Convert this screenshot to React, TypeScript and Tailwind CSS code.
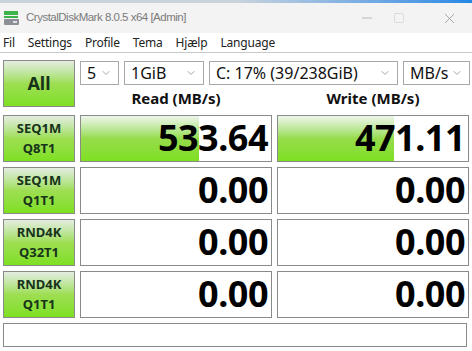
import { ChevronDown, Minus, Square, X } from "lucide-react";

const font = { fontFamily: '"Noto Sans", "Open Sans", sans-serif' };
const titleFont = { fontFamily: '"Liberation Sans", Arial, sans-serif' };

const rows = [
	{ a: "SEQ1M", b: "Q8T1", read: "533.64", write: "471.11", rw: 118, ww: 116 },
	{ a: "SEQ1M", b: "Q1T1", read: "0.00", write: "0.00", rw: 0, ww: 0 },
	{ a: "RND4K", b: "Q32T1", read: "0.00", write: "0.00", rw: 0, ww: 0 },
	{ a: "RND4K", b: "Q1T1", read: "0.00", write: "0.00", rw: 0, ww: 0 },
];

const Select = ({ label, className }: { label: string; className: string }) => (
	<div
		className={`h-[24px] border border-[#a8a8a8] bg-white flex items-center justify-between pl-[6px] pr-[6px] text-[16px] text-[#111] ${className}`}
	>
		<span className="leading-none">{label}</span>
		<ChevronDown className="size-3 text-[#888]" strokeWidth={1.5} />
	</div>
);

const TestButton = ({ children }: { children: React.ReactNode }) => (
	<div className="w-[72px] h-[47px] border border-[#8a8a8a] bg-gradient-to-b from-[#e4ece0] via-[#9ede52] to-[#7ee01e] flex flex-col items-center justify-center font-bold text-[#17331a] leading-[20px]">
		{children}
	</div>
);

const Value = ({ value, width }: { value: string; width: number }) => (
	<div className="relative w-[192px] h-[47px] border border-[#8a8a8a] bg-white overflow-hidden">
		<div
			className="absolute left-0 top-0 bottom-0 bg-gradient-to-b from-[#eef5ea] via-[#96dc4a] to-[#7ee01e]"
			style={{ width }}
		/>
		<div className="relative h-full flex items-center justify-end pr-[3px] text-[36px] font-bold text-black leading-none tracking-[-0.5px]">
			{value}
		</div>
	</div>
);

export default function App() {
	return (
		<div className="w-[472px] h-[351px] bg-white overflow-hidden" style={font}>
			<div className="h-[3px] bg-gradient-to-r from-[#c9d3dc] via-[#c9d3dc] to-[#1e88e5]" />
			<div className="h-[30px] bg-[#f3f3f3] flex items-center">
				<div className="ml-[4px] w-[15px] h-[14px] flex flex-col gap-[1px]">
					<div className="h-[4px] w-[14px] bg-[#3cb44a]" />
					<div className="h-[2px] w-[14px] bg-[#3cb44a]" />
					<div className="h-[6px] w-[15px] bg-[#8c9096] rounded-[1px] flex items-center justify-end pr-[2px]">
						<div className="w-[4px] h-[2px] bg-[#e0e0e0]" />
					</div>
				</div>
				<span className="ml-[7px] text-[11.5px] tracking-[-0.5px] text-[#7b7b7b]" style={titleFont}>
					CrystalDiskMark 8.0.5 x64 [Admin]
				</span>
				<div className="ml-auto flex items-center">
					<Minus className="size-4 text-[#9a9a9a] mr-[18px]" strokeWidth={1} />
					<Square className="size-3 text-[#c4c4c4] mr-[36px]" strokeWidth={1} />
					<X className="size-[17px] text-[#8a8a8a] mr-[14px]" strokeWidth={1} />
				</div>
			</div>
			<div className="h-[20px] bg-white border-b border-[#c8c8c8] flex items-center gap-[13px] pl-[3px] text-[12px] tracking-[-0.2px] text-[#222]">
				<span>Fil</span>
				<span>Settings</span>
				<span>Profile</span>
				<span>Tema</span>
				<span>Hjælp</span>
				<span>Language</span>
			</div>
			<div className="pl-[3px] pt-[7px] flex flex-col gap-[5px]">
				<div className="flex gap-[5px]">
					<div className="w-[72px] h-[47px] border border-[#8a8a8a] bg-gradient-to-b from-[#e4ece0] via-[#9ede52] to-[#7ee01e] flex items-center justify-center font-bold text-[18px] text-[#17331a]">
						All
					</div>
					<div className="flex flex-col">
						<div className="flex gap-[5px] pt-[1px]">
							<Select label="5" className="w-[39px]" />
							<Select label="1GiB" className="w-[80px]" />
							<Select label="C: 17% (39/238GiB)" className="w-[189px]" />
							<Select label="MB/s" className="w-[67px]" />
						</div>
						<div className="flex gap-[5px] mt-[2px] text-[15px] font-bold text-[#111]">
							<div className="w-[192px] text-center">Read (MB/s)</div>
							<div className="w-[192px] text-center">Write (MB/s)</div>
						</div>
					</div>
				</div>
				{rows.map((r, i) => (
					<div key={i} className="flex gap-[5px]">
						<TestButton>
							<span className="text-[13px]">{r.a}</span>
							<span className="text-[13px]">{r.b}</span>
						</TestButton>
						<Value value={r.read} width={r.rw} />
						<Value value={r.write} width={r.ww} />
					</div>
				))}
				<div className="w-[464px] h-[24px] border border-[#8a8a8a] bg-white" />
			</div>
		</div>
	);
}
